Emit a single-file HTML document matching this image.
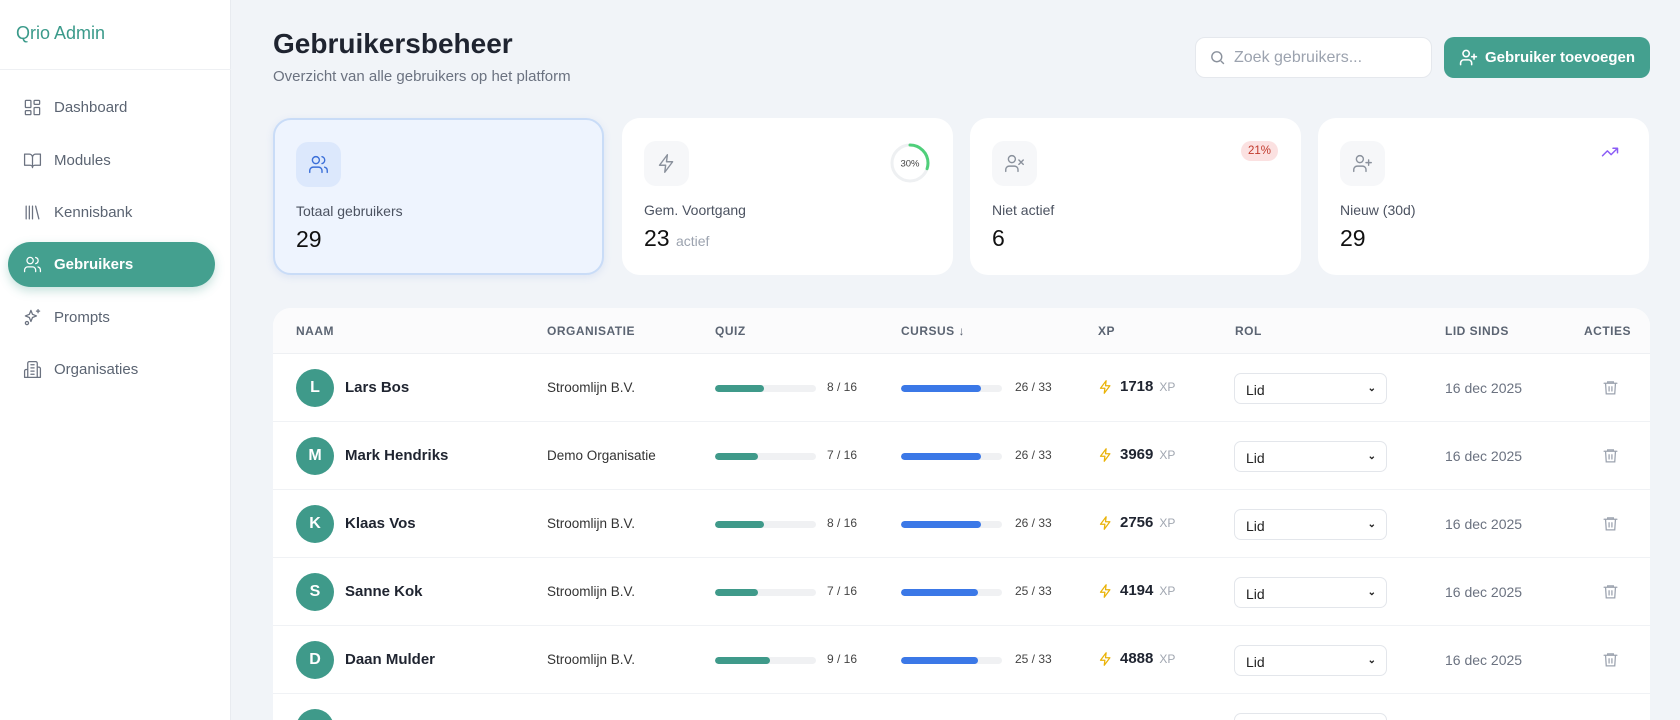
<!DOCTYPE html>
<html style="overflow:hidden;width:1680px;height:720px"><head><meta charset="utf-8"><style>
*{box-sizing:border-box;margin:0;padding:0}
body{width:1680px;height:720px;overflow:hidden;background:#f1f4f8;font-family:"Liberation Sans",sans-serif;color:#1f2430;position:relative}
.sb{position:absolute;left:0;top:0;width:231px;height:720px;background:#fff;border-right:1px solid #e8ebf0}
.logo{position:absolute;left:16px;top:23px;font-size:18px;color:#3a9a8a}
.sbline{position:absolute;left:0;top:69px;width:231px;height:1px;background:#eef0f3}
.nav{position:absolute;left:8px;width:207px;height:45px;display:flex;align-items:center;padding-left:15px;font-size:15px;color:#5b6472;border-radius:23px}
.nav svg{width:19px;height:19px;margin-right:12px;fill:none;stroke:#6b7280;stroke-width:1.6;stroke-linecap:round;stroke-linejoin:round}
.nav.act{background:#44a08f;color:#fff;font-weight:bold;box-shadow:0 4px 10px rgba(68,160,143,.3)}
.nav.act svg{stroke:#fff}
h1{position:absolute;left:273px;top:28px;font-size:28px;font-weight:600;color:#1f2430}
.sub{position:absolute;left:273px;top:68px;font-size:15px;color:#6b7280}
.search{position:absolute;left:1195px;top:37px;width:237px;height:41px;background:#fff;border:1px solid #e5e8ed;border-radius:10px;display:flex;align-items:center;padding-left:13px;font-size:16px;color:#9ca3af}
.search svg{margin-right:8px}
.btn{position:absolute;left:1444px;top:37px;width:206px;height:41px;background:#44a08f;border-radius:10px;color:#fff;font-weight:bold;font-size:15px;display:flex;align-items:center;justify-content:center}
.btn svg{margin-right:7px}
.card{position:absolute;top:118px;width:331px;height:157px;background:#fff;border-radius:18px}
.card.a{background:#eef4fe;border:2px solid #c9dcf7;box-shadow:0 2px 8px rgba(100,140,220,.15)}
.ib{position:absolute;left:22px;top:23px;width:45px;height:45px;border-radius:12px;background:#f6f7f9;display:flex;align-items:center;justify-content:center}
.card.a .ib{background:#dce8fc;left:21px;top:22px}
.ib svg{width:21px;height:21px;fill:none;stroke:#8a919c;stroke-width:1.6;stroke-linecap:round;stroke-linejoin:round}
.lbl{position:absolute;left:22px;top:84px;font-size:14px;color:#4b5260}
.num{position:absolute;left:22px;top:107px;font-size:23px;color:#111}
.num small{font-size:14px;color:#9ca3af}
.card.a .lbl{left:21px;top:83px}.card.a .num{left:21px;top:106px}
.tbl{position:absolute;left:273px;top:308px;width:1377px;height:412px;background:#fff;border-radius:18px 18px 0 0;overflow:hidden}
.th{height:46px;background:#fbfbfc;border-bottom:1px solid #eef0f3;position:relative;font-size:12px;font-weight:bold;color:#5b6472;letter-spacing:.5px}
.th span,.tr>*{position:absolute}
.th span{top:16px}
.tr{height:68px;border-bottom:1px solid #f0f2f5;position:relative}
.av{left:23px;top:15px;width:38px;height:38px;border-radius:50%;background:#3f9a8a;color:#fff;font-weight:bold;font-size:16px;display:flex;align-items:center;justify-content:center}
.nm{left:72px;top:25px;font-size:15px;font-weight:bold;color:#1f2430}
.org{left:274px;top:26px;font-size:13.5px;color:#333}
.bar{top:31px;width:101px;height:7px;border-radius:4px;background:#f0f1f3;overflow:hidden}
.bar i{display:block;height:100%;border-radius:4px}
.cnt{top:26px;font-size:12px;color:#444}
.bolt{left:825px;top:25px}
.xp{left:847px;top:24px;font-size:15px;font-weight:bold;color:#1f2430}
.xp small{font-size:12px;font-weight:normal;color:#a0a6b0;margin-left:6px}
.sel{left:961px;top:19px;width:153px;height:31px;border:1px solid #e3e6eb;border-radius:7px;font-size:14px;padding:8px 0 0 11px;color:#222}
.sel b{position:absolute;right:10px;top:9px;font-size:10px}
.dt{left:1172px;top:26px;font-size:14px;color:#6b7280}
</style></head><body>
<div class="sb">
<div class="logo">Qrio Admin</div>
<div class="sbline"></div>
<div class="nav" style="top:85px"><svg viewBox="0 0 24 24"><rect x="3" y="3" width="7" height="9" rx="1"/><rect x="14" y="3" width="7" height="5" rx="1"/><rect x="14" y="12" width="7" height="9" rx="1"/><rect x="3" y="16" width="7" height="5" rx="1"/></svg>Dashboard</div>
<div class="nav" style="top:138px"><svg viewBox="0 0 24 24"><path d="M2 4h6a4 4 0 0 1 4 4v13a3 3 0 0 0-3-3H2zM22 4h-6a4 4 0 0 0-4 4v13a3 3 0 0 1 3-3h7z"/></svg>Modules</div>
<div class="nav" style="top:190px"><svg viewBox="0 0 24 24"><path d="M4 4v16M8 4v16M12 4v16M16 4l4 16"/></svg>Kennisbank</div>
<div class="nav act" style="top:242px"><svg viewBox="0 0 24 24"><circle cx="9" cy="7" r="4"/><path d="M2 21v-2a4 4 0 0 1 4-4h6a4 4 0 0 1 4 4v2M16 3.1a4 4 0 0 1 0 7.8M22 21v-2a4 4 0 0 0-3-3.9"/></svg>Gebruikers</div>
<div class="nav" style="top:295px"><svg viewBox="0 0 24 24"><path d="M10 3l2 5 5 2-5 2-2 5-2-5-5-2 5-2zM19 2v4M17 4h4"/><circle cx="5" cy="19" r="2"/></svg>Prompts</div>
<div class="nav" style="top:347px"><svg viewBox="0 0 24 24"><path d="M6 22V4a2 2 0 0 1 2-2h8a2 2 0 0 1 2 2v18zM6 12H4a2 2 0 0 0-2 2v8h4M18 9h2a2 2 0 0 1 2 2v11h-4M10 6h4M10 10h4M10 14h4M10 18h4"/></svg>Organisaties</div>
</div>
<h1>Gebruikersbeheer</h1>
<div class="sub">Overzicht van alle gebruikers op het platform</div>
<div class="search"><svg width="17" height="17" viewBox="0 0 24 24" fill="none" stroke="#8a919c" stroke-width="2"><circle cx="11" cy="11" r="7"/><path d="M21 21l-4.3-4.3"/></svg>Zoek gebruikers...</div>
<div class="btn"><svg width="19" height="19" viewBox="0 0 24 24" fill="none" stroke="#fff" stroke-width="2" stroke-linecap="round"><circle cx="9" cy="7" r="4"/><path d="M2 21v-2a4 4 0 0 1 4-4h6a4 4 0 0 1 4 4v2M19 8v6M22 11h-6"/></svg>Gebruiker toevoegen</div>

<div class="card a" style="left:273px"><div class="ib"><svg viewBox="0 0 24 24" style="stroke:#3b6fd8"><circle cx="9" cy="7" r="4"/><path d="M2 21v-2a4 4 0 0 1 4-4h6a4 4 0 0 1 4 4v2M16 3.1a4 4 0 0 1 0 7.8M22 21v-2a4 4 0 0 0-3-3.9"/></svg></div><div class="lbl">Totaal gebruikers</div><div class="num">29</div></div>
<div class="card" style="left:622px"><div class="ib"><svg viewBox="0 0 24 24"><path d="M13 2L4 14h7l-1 8 9-12h-7z"/></svg></div>
<svg style="position:absolute;right:22px;top:24px" width="42" height="42" viewBox="0 0 42 42"><circle cx="21" cy="21" r="18" fill="none" stroke="#eef0f2" stroke-width="3"/><circle cx="21" cy="21" r="18" fill="none" stroke="#4fcf7a" stroke-width="3" stroke-dasharray="34 200" transform="rotate(-90 21 21)" stroke-linecap="round"/><text x="21" y="24.5" font-size="9.5" text-anchor="middle" fill="#444" font-family="Liberation Sans">30%</text></svg>
<div class="lbl">Gem. Voortgang</div><div class="num">23 <small>actief</small></div></div>
<div class="card" style="left:970px"><div class="ib"><svg viewBox="0 0 24 24"><circle cx="9" cy="7" r="4"/><path d="M2 21v-2a4 4 0 0 1 4-4h6a4 4 0 0 1 4 4v2M17 8l5 5M22 8l-5 5"/></svg></div>
<div style="position:absolute;right:23px;top:23px;background:#fbe1e1;color:#c0392b;font-size:11.5px;padding:4px 7px;border-radius:10px">21%</div>
<div class="lbl">Niet actief</div><div class="num">6</div></div>
<div class="card" style="left:1318px"><div class="ib"><svg viewBox="0 0 24 24"><circle cx="9" cy="7" r="4"/><path d="M2 21v-2a4 4 0 0 1 4-4h6a4 4 0 0 1 4 4v2M19 8v6M22 11h-6"/></svg></div>
<svg style="position:absolute;right:30px;top:25px" width="18" height="18" viewBox="0 0 24 24" fill="none" stroke="#8b5cf6" stroke-width="2" stroke-linecap="round" stroke-linejoin="round"><path d="M22 7l-8.5 8.5-5-5L2 17M16 7h6v6"/></svg>
<div class="lbl">Nieuw (30d)</div><div class="num">29</div></div>

<div class="tbl">
<div class="th"><span style="left:23px">NAAM</span><span style="left:274px">ORGANISATIE</span><span style="left:442px">QUIZ</span><span style="left:628px">CURSUS ↓</span><span style="left:825px">XP</span><span style="left:962px">ROL</span><span style="left:1172px">LID SINDS</span><span style="left:1311px">ACTIES</span></div>
<div id="rows"></div>
</div>
<script>
var d=[["L","Lars Bos","Stroomlijn B.V.",8,26,"1718"],["M","Mark Hendriks","Demo Organisatie",7,26,"3969"],["K","Klaas Vos","Stroomlijn B.V.",8,26,"2756"],["S","Sanne Kok","Stroomlijn B.V.",7,25,"4194"],["D","Daan Mulder","Stroomlijn B.V.",9,25,"4888"],["J","Jan de Vries","Stroomlijn B.V.",8,24,"2100"]];
var h="";d.forEach(function(r){h+='<div class="tr"><div class="av">'+r[0]+'</div><div class="nm">'+r[1]+'</div><div class="org">'+r[2]+'</div><div class="bar" style="left:442px"><i style="width:'+(r[3]/16*97)+'%;background:#3f9a8a"></i></div><div class="cnt" style="left:554px">'+r[3]+' / 16</div><div class="bar" style="left:628px"><i style="width:'+(r[4]/33*100)+'%;background:#3b78e7"></i></div><div class="cnt" style="left:742px">'+r[4]+' / 33</div><svg class="bolt" width="15" height="16" viewBox="0 0 24 24" fill="none" stroke="#eab308" stroke-width="2" stroke-linejoin="round"><path d="M13 2L4 14h7l-1 8 9-12h-7z"/></svg><div class="xp">'+r[5]+'<small>XP</small></div><div class="sel">Lid<b>&#8964;</b></div><div class="dt">16 dec 2025</div><svg style="position:absolute;left:1329px;top:25px" width="17" height="17" viewBox="0 0 24 24" fill="none" stroke="#9ca3af" stroke-width="1.8" stroke-linecap="round"><path d="M3 6h18M8 6V4h8v2M5 6l1 15h12l1-15M10 11v6M14 11v6"/></svg></div>'});
document.getElementById("rows").innerHTML=h;
</script>
</body></html>
